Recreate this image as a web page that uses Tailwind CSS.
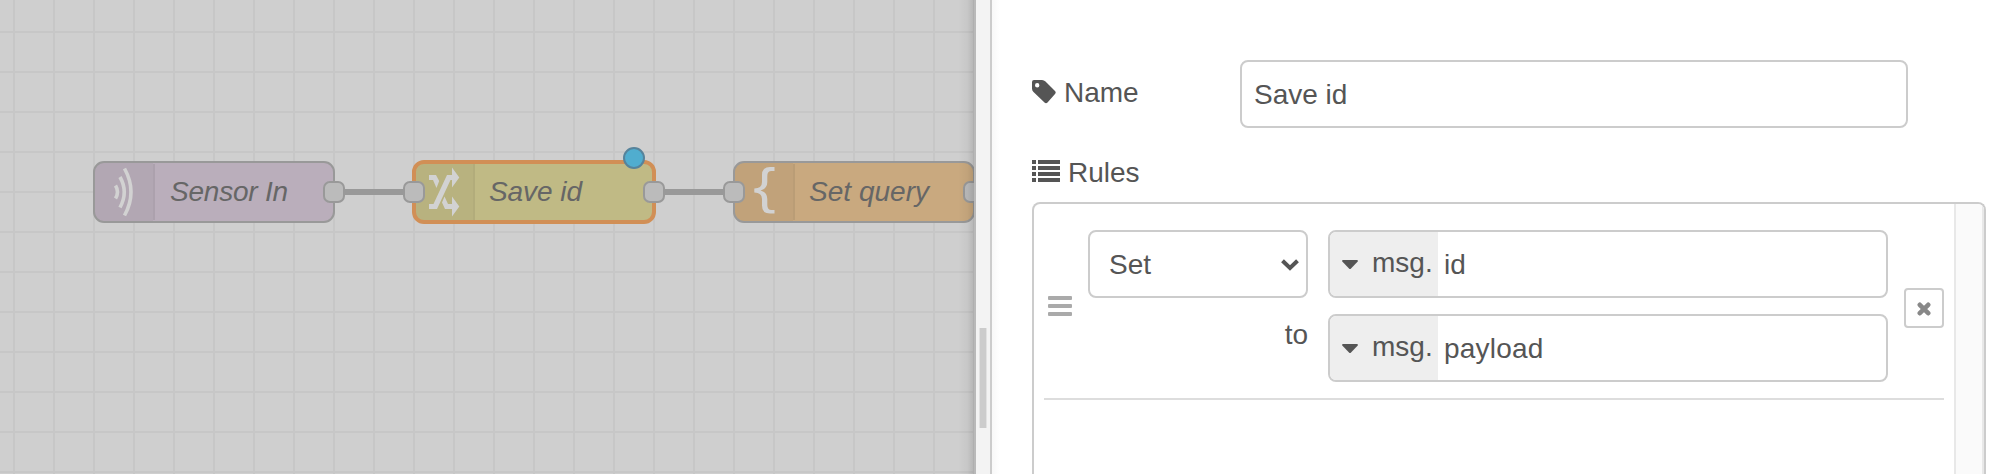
<!DOCTYPE html>
<html lang="en">
<head>
<meta charset="utf-8">
<title>Edit change node</title>
<script src="https://cdn.jsdelivr.net/npm/@tailwindcss/browser@4"></script>
</head>
<body class="flex h-[474px] w-[2014px] overflow-hidden bg-white font-['Liberation_Sans',Arial,sans-serif] text-[28px] leading-[40px] text-[#555]">
  <!-- Flow canvas -->
  <main class="h-[474px] w-[976px] shrink-0 border-r-2 border-[#b9b9b9] bg-[#cfcfcf]">
    <svg width="974" height="474" viewBox="0 0 974 474" class="block">
      <defs>
        <pattern id="grid" x="13" y="31" width="40" height="40" patternUnits="userSpaceOnUse">
          <path d="M1 0V40M0 1H40" stroke="#c7c7c7" stroke-width="2"/>
        </pattern>
        <linearGradient id="shade"><stop offset="0" stop-color="#000" stop-opacity="0"/><stop offset=".6" stop-color="#000" stop-opacity=".04"/><stop offset="1" stop-color="#000" stop-opacity=".13"/></linearGradient>
      </defs>
      <rect width="974" height="474" fill="url(#grid)"/>
      <path d="M334 192H414M654 192H734" stroke="#999" stroke-width="6"/>

      <g stroke="#999" stroke-width="2">
        <rect x="94" y="162" width="240" height="60" rx="10" fill="#baaebb"/>
        <rect x="734" y="162" width="240" height="60" rx="10" fill="#c9a97f"/>
      </g>
      <rect x="414" y="162" width="240" height="60" rx="10" fill="#c0ba85" stroke="#d18f56" stroke-width="4"/>

      <g fill="#000" fill-opacity=".04">
        <path d="M153 163H104a9 9 0 0 0-9 9v40a9 9 0 0 0 9 9h49z"/>
        <path d="M473 164H424a8 8 0 0 0-8 8v40a8 8 0 0 0 8 8h49z"/>
        <path d="M793 163H744a9 9 0 0 0-9 9v40a9 9 0 0 0 9 9h49z"/>
      </g>
      <path d="M154 164V220M474 164V220M794 164V220" stroke="#000" stroke-opacity=".07" stroke-width="2"/>

      <g fill="none" stroke="#d2d2d2" stroke-width="3.600">
        <path d="M115.500 185.500Q119.500 192 115.500 198.500M120 177Q128.500 192 120 207.500M124.500 168.500Q137.500 192 124.500 215.500"/>
      </g>
      <g fill="#d2d2d2">
        <path d="M429 175H436L439.200 181L436.500 188L433 180H429ZM429 204H433.500L447 175H452V167.500L459.300 177.500L452 187.500V180H450.500L437 209H429ZM444.500 196.500L448 204H452V196.500L459.300 206.500L452 216.500V209H445L442 202.500Z"/>
      </g>
      <path d="M774.500 167V171H771.500Q767.300 171 767.300 176V182Q767.300 188.500 760.500 190.500Q767.300 192.500 767.300 199V205Q767.300 210 771.500 210H774.500V213.500H770Q762 213.500 762 205.500V199Q762 192.500 754.300 192.500V188.500Q762 188.500 762 182V175Q762 167 770 167Z" fill="#d2d2d2"/>

      <g fill="#666" font-size="28" font-style="italic">
        <text x="170" y="201" textLength="118">Sensor In</text>
        <text x="489" y="201" textLength="93">Save id</text>
        <text x="809" y="201" textLength="120">Set query</text>
      </g>
      <g fill="#bbb" stroke="#999" stroke-width="2">
        <rect x="324" y="182" width="20" height="20" rx="6"/>
        <rect x="404" y="182" width="20" height="20" rx="6"/>
        <rect x="644" y="182" width="20" height="20" rx="6"/>
        <rect x="724" y="182" width="20" height="20" rx="6"/>
        <rect x="964" y="182" width="20" height="20" rx="6"/>
      </g>
      <circle cx="634" cy="158" r="10" fill="#50adcf" stroke="#56839b" stroke-width="2"/>
      <rect x="958" width="16" height="474" fill="url(#shade)"/>
    </svg>
  </main>

  <!-- Separator with drag grip -->
  <div class="h-[474px] w-[16px] shrink-0 border-r-2 border-[#ccc] bg-[#f3f3f3] pt-[328px]">
    <div class="ml-[3px] h-[100px] w-[8px] border-x border-[#e2e2e2] bg-[#ccc]"></div>
  </div>

  <!-- Editor form -->
  <section class="h-[474px] w-[1022px] shrink-0 bg-linear-to-r from-[#f8f8f8] to-white to-[8px] pl-[40px] pt-[60px]">
    <div class="flex h-[68px] w-[876px]">
      <label class="flex w-[208px] pt-[13px]">
        <svg width="24" height="24" viewBox="0 0 24 24" class="mt-[7px] shrink-0" fill="#555"><path fill-rule="evenodd" d="M2 0H10Q12 0 13.500 1.500L23 11Q24.400 12.500 23 14L15.500 22.500Q14 24 12.500 22.500L1.500 12Q0 10.500 0 8.500V2Q0 0 2 0ZM5.200 3A2.200 2.200 0 1 0 5.200 7.400A2.200 2.200 0 0 0 5.200 3Z"/></svg>
        <span class="ml-[8px]">Name</span>
      </label>
      <div class="h-[68px] flex-1 rounded-[8px] border-2 border-[#ccc] bg-white pl-[12px] pt-[13px]">Save id</div>
    </div>

    <div class="mt-[24px] flex h-[50px]">
      <svg width="28" height="22" viewBox="0 0 28 22" class="mt-[8px]" fill="#555"><path d="M0 0h4v4H0zM6 0h22v4H6zM0 6h4v4H0zM6 6h22v4H6zM0 12h4v4H0zM6 12h22v4H6zM0 18h4v4H0zM6 18h22v4H6z"/></svg>
      <span class="ml-[8px] mt-px">Rules</span>
    </div>

    <div class="flex h-[272px] w-[954px] overflow-hidden rounded-t-[8px] border-2 border-b-0 border-[#ccc] bg-white">
      <div class="w-[920px] px-[10px]">
        <div class="flex h-[196px] border-b-2 border-[#ddd] pt-[26px]">
          <div class="ml-[4px] mt-[66px] flex w-[24px] flex-col gap-[4px]">
            <i class="h-[4px] rounded-[1px] bg-[#aaa]"></i><i class="h-[4px] rounded-[1px] bg-[#aaa]"></i><i class="h-[4px] rounded-[1px] bg-[#aaa]"></i>
          </div>
          <div class="ml-[16px] w-[220px]">
            <div class="flex h-[68px] justify-between rounded-[8px] border-2 border-[#ccc] pl-[19px] pr-[7px] pt-[13px]">
              <span>Set</span>
              <svg width="18" height="12" viewBox="0 0 18 12" class="mt-[14px]" fill="none" stroke="#555" stroke-width="4"><path d="M1.500 1.800L9 9L16.500 1.800"/></svg>
            </div>
            <div class="mt-[17px] text-right">to</div>
          </div>
          <div class="ml-[20px] flex w-[560px] flex-col gap-[16px]">
            <div class="flex h-[68px] overflow-hidden rounded-[8px] border-2 border-[#ccc]">
              <div class="flex w-[108px] bg-[#eee] pl-[12px] pt-[11px]">
                <svg width="16" height="9" viewBox="0 0 16 9" class="mt-[17px]" fill="#555"><path d="M1 0H15Q16.500 .5 15.500 1.800L9 8.400Q8 9.400 7 8.400L.5 1.800Q-.5 .5 1 0Z"/></svg>
                <span class="ml-[14px]">msg.</span>
              </div>
              <span class="pl-[6px] pt-[13px]">id</span>
            </div>
            <div class="flex h-[68px] overflow-hidden rounded-[8px] border-2 border-[#ccc]">
              <div class="flex w-[108px] bg-[#eee] pl-[12px] pt-[11px]">
                <svg width="16" height="9" viewBox="0 0 16 9" class="mt-[17px]" fill="#555"><path d="M1 0H15Q16.500 .5 15.500 1.800L9 8.400Q8 9.400 7 8.400L.5 1.800Q-.5 .5 1 0Z"/></svg>
                <span class="ml-[14px]">msg.</span>
              </div>
              <span class="pl-[6px] pt-[13px] tracking-[0.2px]">payload</span>
            </div>
          </div>
          <div class="ml-[16px] mt-[58px] flex h-[40px] w-[40px] items-center justify-center rounded-[4px] border-2 border-[#ccc]">
            <svg width="14" height="14" viewBox="0 0 14 14" class="mt-[2px]" stroke="#888" stroke-width="4.600" stroke-linecap="round"><path d="M2.800 2.800L11.200 11.200M11.200 2.800L2.800 11.200"/></svg>
          </div>
        </div>
      </div>
      <div class="w-[30px] border-x-2 border-[#e8e8e8] bg-[#fafafa]"></div>
    </div>
  </section>
</body>
</html>
